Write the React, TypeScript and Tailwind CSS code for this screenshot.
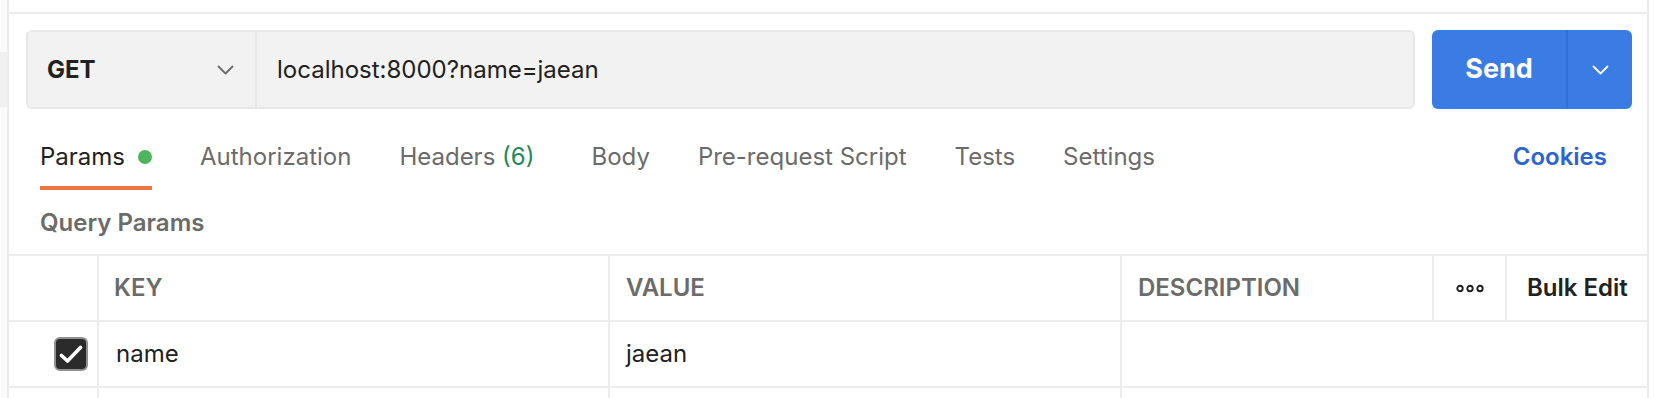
import React from "react";

const tabs = [
  { label: "Params", active: true, dot: true },
  { label: "Authorization" },
  { label: "Headers", count: "(6)" },
  { label: "Body" },
  { label: "Pre-request Script" },
  { label: "Tests" },
  { label: "Settings" },
];

function Chevron({ color }: { color: string }) {
  return (
    <svg width="17" height="10" viewBox="0 0 17 10" fill="none">
      <polyline
        points="1.5,1.5 8.5,8.5 15.5,1.5"
        stroke={color}
        strokeWidth="1.8"
        strokeLinecap="round"
        strokeLinejoin="round"
      />
    </svg>
  );
}

function Dots() {
  return (
    <svg width="28" height="9" viewBox="0 0 28 9" fill="none">
      <circle cx="4" cy="4.5" r="2.7" stroke="#212121" strokeWidth="1.9" />
      <circle cx="14" cy="4.5" r="2.7" stroke="#212121" strokeWidth="1.9" />
      <circle cx="24" cy="4.5" r="2.7" stroke="#212121" strokeWidth="1.9" />
    </svg>
  );
}

function Checkbox() {
  return (
    <div className="w-[34px] h-[34px] rounded-[6px] border-2 border-[#909090] bg-[#2b2b2b] flex items-center justify-center">
      <svg width="24" height="19" viewBox="0 0 24 19" fill="none">
        <polyline
          points="2.5,10.5 8.5,16 21.5,2.5"
          stroke="white"
          strokeWidth="3.6"
          strokeLinecap="round"
          strokeLinejoin="round"
        />
      </svg>
    </div>
  );
}

export default function App() {
  return (
    <div className="w-[1668px] h-[398px] overflow-hidden bg-white flex font-['Inter',sans-serif]">
      {/* sidebar edge */}
      <div className="w-[7px] shrink-0 bg-[#fafafa]">
        <div className="mt-[52px] h-[55px] bg-[#f0f0f0]" />
      </div>

      <div className="w-[1642px] shrink-0 border-x-2 border-[#ededed]">
        <div className="h-[12px]" />
        <div className="border-t-2 border-[#ededed]">
          {/* url bar */}
          <div className="flex gap-[17px] pt-[16px] pl-[17px] pr-[15px]">
            <div className="flex-1 h-[79px] flex rounded-[6px] border-2 border-[#e8e8e8] bg-[#f2f2f2]">
              <div className="w-[229px] border-r-2 border-[#e6e6e6] flex items-center justify-between pl-[19px] pr-[21px]">
                <span className="text-[24px] font-bold text-[#212121]">GET</span>
                <Chevron color="#6b6b6b" />
              </div>
              <div className="flex-1 flex items-center pl-[20px]">
                <span className="text-[24px] text-[#212121]">localhost:8000?name=jaean</span>
              </div>
            </div>
            <div className="w-[200px] h-[79px] flex rounded-[6px] bg-[#3a7be4] text-white">
              <div className="w-[136px] border-r-2 border-[#326fd5] flex items-center justify-center">
                <span className="text-[27px] font-bold">Send</span>
              </div>
              <div className="flex-1 flex items-center justify-center">
                <Chevron color="white" />
              </div>
            </div>
          </div>

          {/* tabs */}
          <div className="flex items-start gap-[48px] pt-[32px] pl-[31px] pr-[40px]">
            {tabs.map((t) => (
              <div key={t.label} className={t.count ? "flex flex-col mr-[9px]" : "flex flex-col"}>
                <div className="h-[32px] flex items-center gap-[13px]">
                  <span
                    className={
                      t.active
                        ? "text-[24px] leading-[32px] text-[#212121]"
                        : "text-[24px] leading-[32px] text-[#6b6b6b]"
                    }
                  >
                    {t.label}
                    {t.count && <span className="text-[#23875a]"> {t.count}</span>}
                  </span>
                  {t.dot && <span className="w-[14px] h-[14px] rounded-full bg-[#4fb55c]" />}
                </div>
                <div
                  className={
                    t.active
                      ? "mt-[13px] h-[4px] bg-[#f07443]"
                      : "mt-[13px] h-[4px] bg-transparent"
                  }
                />
              </div>
            ))}
            <span className="ml-auto text-[24px] leading-[32px] font-semibold text-[#2b63d5]">
              Cookies
            </span>
          </div>

          {/* query params */}
          <div className="mt-[19px] pl-[31px] h-[28px] text-[24px] leading-[28px] font-semibold text-[#6b6b6b]">
            Query Params
          </div>

          {/* table */}
          <div className="mt-[17px] border-t-2 border-[#ededed]">
            <div className="flex h-[66px] border-b-2 border-[#ededed] text-[24px] font-semibold text-[#6b6b6b]">
              <div className="w-[90px] border-r-2 border-[#ededed]" />
              <div className="w-[511px] border-r-2 border-[#ededed] flex items-center pl-[15px]">KEY</div>
              <div className="w-[512px] border-r-2 border-[#ededed] flex items-center pl-[16px]">VALUE</div>
              <div className="w-[312px] border-r-2 border-[#ededed] flex items-center pl-[16px]">DESCRIPTION</div>
              <div className="w-[73px] border-r-2 border-[#ededed] flex items-center justify-center">
                <Dots />
              </div>
              <div className="flex-1 flex items-center pl-[20px] text-[#212121]">Bulk Edit</div>
            </div>

            <div className="flex h-[66px] border-b-2 border-[#ededed] text-[24px] text-[#212121]">
              <div className="w-[90px] border-r-2 border-[#ededed] flex items-center justify-end pr-[9px]">
                <Checkbox />
              </div>
              <div className="w-[511px] border-r-2 border-[#ededed] flex items-center pl-[17px]">name</div>
              <div className="w-[512px] border-r-2 border-[#ededed] flex items-center pl-[16px]">jaean</div>
              <div className="flex-1" />
            </div>

            <div className="flex h-[64px]">
              <div className="w-[90px] border-r-2 border-[#ededed]" />
              <div className="w-[511px] border-r-2 border-[#ededed]" />
              <div className="w-[512px] border-r-2 border-[#ededed]" />
              <div className="flex-1" />
            </div>
          </div>
        </div>
      </div>

      <div className="flex-1 bg-white" />
    </div>
  );
}
